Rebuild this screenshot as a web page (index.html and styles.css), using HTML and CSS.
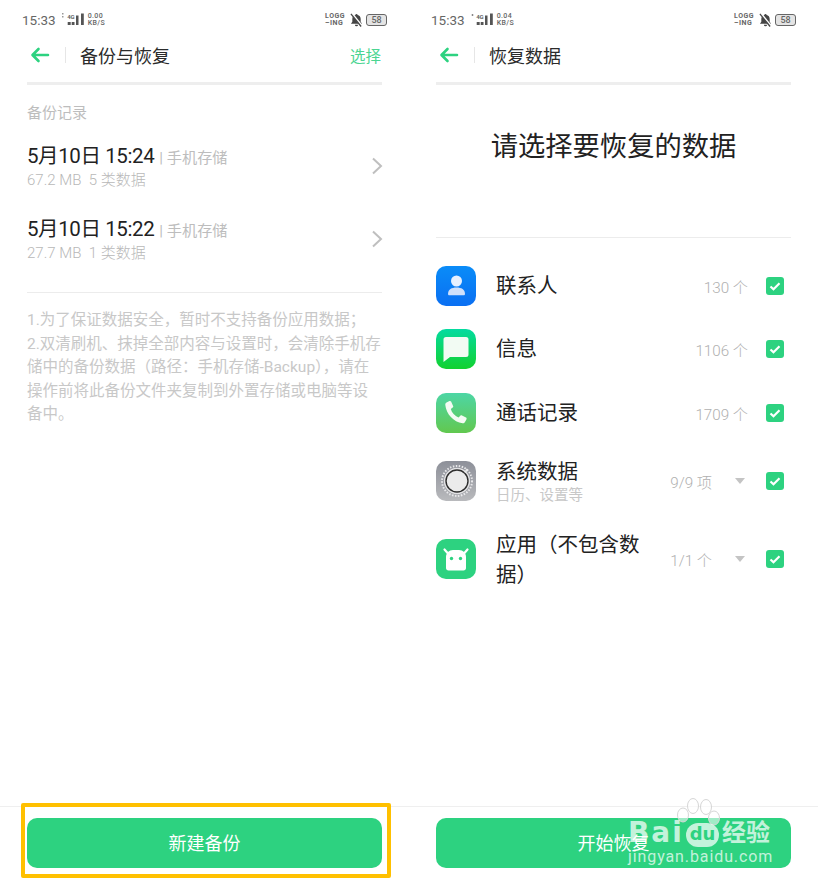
FILE: index.html
```html
<!DOCTYPE html>
<html lang="zh">
<head>
    <meta charset="UTF-8">
    <title>备份与恢复</title>
    <meta name="viewport" content="width=device-width, initial-scale=1.0">
    <link rel="stylesheet" href="styles.css">
</head>
<body>
    <div class="screens">
        <!-- left: backup list -->
        <section class="screen">
            <div class="status">
                <span class="time">15:33</span>
                <span class="net"><i>4G</i>
                    <svg width="22" height="13" viewBox="0 0 22 13"><path d="M0 1h1.500v1.500H0zM0 4h1.500v1.500H0z" fill="#999"/><path d="M5.700 10h3v3h-3zM9.700 10h2.800v3H9.700zM14 3.500h2.500V13H14zM19 1.500h2.800V13H19z" fill="#555"/></svg>
                </span>
                <span class="speed">0.00<br>KB/S</span>
                <span class="status-right">
                    <span class="logging">LOGG<br>–ING</span>
                    <svg width="13" height="14" viewBox="0 0 14 14"><path d="M7 .5a1.200 1.200 0 0 1 1.200 1.200c2 .5 3.300 2 3.300 4.300v3l1.500 2H1l1.500-2V6c0-2.300 1.300-3.800 3.300-4.300A1.200 1.200 0 0 1 7 .5zM5.300 12h3.400a1.700 1.700 0 0 1-3.400 0z" fill="#444"/><path d="M2 0l11 13.500" stroke="#fff" stroke-width="2.200"/><path d="M1 .5l11 13.500" stroke="#444" stroke-width="1.400"/></svg>
                    <span class="battery">58</span>
                </span>
            </div>
            <header class="topbar">
                <svg class="back" width="20" height="16" viewBox="0 0 20 16"><path d="M8.500 2L2.500 8l6 6M3 8h15" fill="none" stroke="#2dd280" stroke-width="2.600" stroke-linecap="round" stroke-linejoin="round"/></svg>
                <span class="bar"></span>
                <h1>备份与恢复</h1>
                <span class="action">选择</span>
            </header>
            <div class="rule"></div>
            <div class="content">
                <div class="label">备份记录</div>
                <div class="record">
                    <div class="record-text">
                        <div class="record-title">5月10日 15:24<small>| 手机存储</small></div>
                        <div class="record-sub">67.2 MB&nbsp; 5 类数据</div>
                    </div>
                    <svg width="12" height="18" viewBox="0 0 12 18"><path d="M2 1.500L10 9l-8 7.500" fill="none" stroke="#bfbfbf" stroke-width="2"/></svg>
                </div>
                <div class="record">
                    <div class="record-text">
                        <div class="record-title">5月10日 15:22<small>| 手机存储</small></div>
                        <div class="record-sub">27.7 MB&nbsp; 1 类数据</div>
                    </div>
                    <svg width="12" height="18" viewBox="0 0 12 18"><path d="M2 1.500L10 9l-8 7.500" fill="none" stroke="#bfbfbf" stroke-width="2"/></svg>
                </div>
                <div class="divider"></div>
                <p class="notes">1.为了保证数据安全，暂时不支持备份应用数据；<br>2.双清刷机、抹掉全部内容与设置时，会清除手机存储中的备份数据（路径：手机存储-Backup），请在操作前将此备份文件夹复制到外置存储或电脑等设备中。</p>
            </div>
            <footer class="bottom">
                <button class="primary">新建备份</button>
                <div class="highlight"></div>
            </footer>
        </section>

        <!-- right: restore data -->
        <section class="screen">
            <div class="status">
                <span class="time">15:33</span>
                <span class="net"><i>4G</i>
                    <svg width="22" height="13" viewBox="0 0 22 13"><path d="M.5 2.500h2v1h-2zM1 2h1v2H1z" fill="#888"/><path d="M5.700 10h3v3h-3zM9.700 10h2.800v3H9.700zM14 3.500h2.500V13H14zM19 1.500h2.800V13H19z" fill="#555"/></svg>
                </span>
                <span class="speed">0.04<br>KB/S</span>
                <span class="status-right">
                    <span class="logging">LOGG<br>–ING</span>
                    <svg width="13" height="14" viewBox="0 0 14 14"><path d="M7 .5a1.200 1.200 0 0 1 1.200 1.200c2 .5 3.300 2 3.300 4.300v3l1.500 2H1l1.500-2V6c0-2.300 1.300-3.800 3.300-4.300A1.200 1.200 0 0 1 7 .5zM5.300 12h3.400a1.700 1.700 0 0 1-3.400 0z" fill="#444"/><path d="M2 0l11 13.500" stroke="#fff" stroke-width="2.200"/><path d="M1 .5l11 13.500" stroke="#444" stroke-width="1.400"/></svg>
                    <span class="battery">58</span>
                </span>
            </div>
            <header class="topbar">
                <svg class="back" width="20" height="16" viewBox="0 0 20 16"><path d="M8.500 2L2.500 8l6 6M3 8h15" fill="none" stroke="#2dd280" stroke-width="2.600" stroke-linecap="round" stroke-linejoin="round"/></svg>
                <span class="bar"></span>
                <h1>恢复数据</h1>
            </header>
            <div class="rule"></div>
            <div class="content">
                <h2 class="prompt">请选择要恢复的数据</h2>
                <div class="divider"></div>
                <ul class="types">
                    <li class="type">
                        <span class="icon icon-contacts">
                            <svg width="40" height="40" viewBox="0 0 40 40"><circle cx="20.500" cy="15" r="5.500" fill="#e6f0ff"/><path d="M12 28c0-4.500 3.500-6.500 8.500-6.500S29 23.500 29 28c0 .8-.6 1.300-1.300 1.300H13.300c-.7 0-1.300-.5-1.300-1.300z" fill="#cfe0fb"/></svg>
                        </span>
                        <span class="name">联系人</span>
                        <span class="count">130 个</span>
                        <span class="check"><svg width="18" height="18" viewBox="0 0 18 18"><path d="M4.500 9.500l3 2.800 6-6" fill="none" stroke="#fff" stroke-width="2.200"/></svg></span>
                    </li>
                    <li class="type">
                        <span class="icon icon-messages">
                            <svg width="40" height="40" viewBox="0 0 40 40"><path d="M10 8h20a2.500 2.500 0 0 1 2.500 2.500v15A2.500 2.500 0 0 1 30 28H14l-6.500 5V10.500A2.500 2.500 0 0 1 10 8z" fill="#f2fbf3"/></svg>
                        </span>
                        <span class="name">信息</span>
                        <span class="count">1106 个</span>
                        <span class="check"><svg width="18" height="18" viewBox="0 0 18 18"><path d="M4.500 9.500l3 2.800 6-6" fill="none" stroke="#fff" stroke-width="2.200"/></svg></span>
                    </li>
                    <li class="type">
                        <span class="icon icon-phone">
                            <svg width="40" height="40" viewBox="0 0 40 40"><path d="M10.500 9.500l3-1.500c.7-.3 1.300 0 1.600.6l2 4.300c.3.600.1 1.200-.4 1.600l-1.900 1.500c1 3.800 4 7 7.700 8.500l1.800-1.800c.5-.5 1.100-.6 1.700-.3l4 2.200c.6.300.8 1 .5 1.600l-1.500 2.800c-.5.900-1.400 1.300-2.400 1.200C17.500 29.200 10.200 21 9.300 12c-.1-1.100.3-2 1.200-2.500z" fill="#f4fbf3"/></svg>
                        </span>
                        <span class="name">通话记录</span>
                        <span class="count">1709 个</span>
                        <span class="check"><svg width="18" height="18" viewBox="0 0 18 18"><path d="M4.500 9.500l3 2.800 6-6" fill="none" stroke="#fff" stroke-width="2.200"/></svg></span>
                    </li>
                    <li class="type type-system">
                        <span class="icon icon-system">
                            <svg width="40" height="40" viewBox="0 0 40 40"><circle cx="21" cy="20" r="15" fill="none" stroke="#e8e8ea" stroke-width="2" stroke-dasharray="1.500 1.500"/><circle cx="21" cy="20" r="13.500" fill="#8f9198"/><circle cx="21" cy="20" r="13.200" fill="#e2e2e4"/><circle cx="21" cy="20" r="11" fill="#ebebeb" stroke="#2e2e2e" stroke-width="1.400"/><path d="M29 11.500l2.500-3.500" stroke="#e9e9e9" stroke-width="2"/></svg>
                        </span>
                        <span class="name">系统数据<small>日历、设置等</small></span>
                        <span class="count">9/9 项</span>
                        <span class="caret"></span>
                        <span class="check"><svg width="18" height="18" viewBox="0 0 18 18"><path d="M4.500 9.500l3 2.800 6-6" fill="none" stroke="#fff" stroke-width="2.200"/></svg></span>
                    </li>
                    <li class="type type-apps">
                        <span class="icon icon-apps">
                            <svg width="40" height="40" viewBox="0 0 40 40"><path d="M8.500 10.500l3.500 4M31.500 10.500l-3.500 4" stroke="#fff" stroke-width="2.200" stroke-linecap="round"/><path d="M10 18c0-4 3-7 7-7h6c4 0 7 3 7 7v11c0 1.500-1 2.500-2.500 2.500h-15C11 31.500 10 30.500 10 29z" fill="#fff"/><circle cx="15.500" cy="19.500" r="1.700" fill="#2dd280"/><circle cx="24.500" cy="19.500" r="1.700" fill="#2dd280"/></svg>
                        </span>
                        <span class="name">应用（不包含数据）</span>
                        <span class="count">1/1 个</span>
                        <span class="caret"></span>
                        <span class="check"><svg width="18" height="18" viewBox="0 0 18 18"><path d="M4.500 9.500l3 2.800 6-6" fill="none" stroke="#fff" stroke-width="2.200"/></svg></span>
                    </li>
                </ul>
            </div>
            <footer class="bottom">
                <button class="primary">开始恢复</button>
            </footer>
            <!-- watermark sits over the button -->
            <div class="watermark">
                <svg class="paw" width="46" height="36" viewBox="0 0 46 36">
                    <g fill="#fff" fill-opacity=".55" stroke="#d6d6d6" stroke-width="1"><ellipse cx="7" cy="18" rx="5.500" ry="7"/><ellipse cx="17" cy="9" rx="5.500" ry="7.500"/><ellipse cx="30" cy="10" rx="5.500" ry="7.500"/><ellipse cx="38" cy="21" rx="5.500" ry="7"/></g>
                </svg>
                <div class="wm-brand">
                    <span class="wm-bai">Bai</span>
                    <span class="wm-du">du</span>
                    <span class="wm-cn">经验</span>
                </div>
                <div class="wm-url">jingyan.baidu.com</div>
            </div>
        </section>
    </div>
</body>
</html>
```

FILE: styles.css
```css
* {
    box-sizing: border-box;
}
html, body {
    margin: 0;
    height: 100%;
}
body {
    font-family: Roboto, "Noto Sans CJK SC", sans-serif;
    background-color: #fff;
    color: #222;
    overflow: hidden;
}
.screens {
    display: flex;
    width: 818px;
    height: 886px;
}
.screen {
    position: relative;
    width: 409px;
    height: 886px;
    display: flex;
    flex-direction: column;
}

/* status bar */
.status {
    height: 37px;
    padding: 12px 22px 0 22px;
    display: flex;
    align-items: flex-start;
    color: #666;
}
.time {
    font-size: 13.500px;
    line-height: 16px;
}
.net {
    position: relative;
    display: block;
    width: 22px;
    height: 13px;
    margin-left: 6px;
}
.net svg {
    display: block;
}
.net i {
    position: absolute;
    top: 2px;
    left: 5.500px;
    font-style: normal;
    font-size: 6px;
    font-weight: 700;
    line-height: 6px;
}
.speed {
    margin: 1px 0 0 4px;
    font-size: 7px;
    letter-spacing: .4px;
    font-weight: 500;
    line-height: 7px;
}
.status-right {
    margin-left: auto;
    display: flex;
    align-items: center;
    gap: 3px;
    height: 14px;
    margin-top: 1px;
}
.logging {
    font-size: 7px;
    letter-spacing: .5px;
    font-weight: 700;
    line-height: 7px;
    margin-right: 2px;
}
.battery {
    width: 21px;
    height: 12px;
    border: 1px solid #666;
    border-radius: 3px;
    background: #e4e4e4;
    font-size: 9px;
    line-height: 10px;
    text-align: center;
    font-weight: 500;
}

/* title bar */
.topbar {
    height: 36px;
    padding: 0 28px 0 30px;
    display: flex;
    align-items: center;
}
.back {
    flex: none;
}
.bar {
    width: 1px;
    height: 16px;
    margin-left: 15px;
    background: #e6e6e6;
}
.topbar h1 {
    margin: 0 0 0 14px;
    font-size: 18px;
    font-weight: 400;
    color: #2b2b2b;
}
.action {
    margin-left: auto;
    color: #4bd592;
    font-size: 15.500px;
}
.rule {
    height: 3px;
    margin: 9px 27px 0;
    background: #eee;
}

.content {
    flex: 1;
    padding: 0 27px;
}
.label {
    margin-top: 18px;
    font-size: 15px;
    line-height: 20px;
    color: #bdbdbd;
}
.record {
    display: flex;
    align-items: center;
    justify-content: space-between;
    height: 73.500px;
    padding-top: 2px;
}
.record svg {
    margin-right: -1px;
}
.label + .record {
    margin-top: 5px;
}
.record-text {
    padding-top: 4px;
}
.record-title {
    font-size: 20.500px;
    letter-spacing: -.4px;
    line-height: 22px;
    color: #222;
}
.record-title small {
    margin-left: 5px;
    font-size: 15.200px;
    letter-spacing: 0;
    color: #bdbdbd;
}
.record-sub {
    font-size: 15px;
    font-weight: 300;
    line-height: 22px;
    color: #b8b8b8;
}
.divider {
    height: 1px;
    background: #ececec;
}
.record + .divider {
    margin-top: 17px;
}
.notes {
    margin: 16px 0 0;
    font-size: 15.500px;
    line-height: 23.500px;
    color: #c8c8c8;
}

/* restore list */
.prompt {
    margin: 0;
    height: 152px;
    padding-top: 44px;
    font-size: 27.300px;
    line-height: 36px;
    font-weight: 400;
    text-align: center;
    color: #222;
}
.types {
    list-style: none;
    margin: 16px 0 0;
    padding: 0 7px 0 0;
}
.type {
    display: flex;
    align-items: center;
    height: 63.500px;
}
.type-system {
    height: 72px;
}
.type-apps {
    height: 84px;
}
.type-apps .name {
    padding-top: 2px;
}
.icon {
    flex: none;
    width: 40px;
    height: 40px;
    border-radius: 10px;
    overflow: hidden;
    display: block;
}
.icon svg {
    display: block;
}
.icon-contacts {
    background: linear-gradient(#0a8cf8, #0a6ff2);
}
.icon-messages {
    background: linear-gradient(#04dba0, #12d12f);
}
.icon-phone {
    background: linear-gradient(#4dd6a5, #62c84f);
}
.icon-system {
    background: linear-gradient(#8d9099, #b9babd);
}
.icon-apps {
    background: #2dd280;
}
.name {
    margin-left: 20px;
    width: 150px;
    font-size: 20.500px;
    line-height: 30px;
    color: #222;
}
.name small {
    display: block;
    font-size: 14.500px;
    line-height: 18px;
    color: #c8c8c8;
}
.count {
    margin-left: auto;
    font-size: 15.200px;
    font-weight: 300;
    color: #b0b0b0;
}
.caret {
    width: 0;
    height: 0;
    margin-left: 23px;
    margin-right: 3px;
    border-left: 5px solid transparent;
    border-right: 5px solid transparent;
    border-top: 6px solid #c4c4c4;
}
.check {
    flex: none;
    width: 18px;
    height: 18px;
    margin-left: 18px;
    border-radius: 3px;
    background: #2dd280;
}
.check svg {
    display: block;
}

/* bottom button */
.bottom {
    position: relative;
    height: 80px;
    padding: 11px 27px 0;
    border-top: 1px solid #efefef;
}
.primary {
    display: block;
    width: 100%;
    height: 50px;
    padding-bottom: 3px;
    border: none;
    border-radius: 10px;
    background-color: #2dd280;
    color: #fff;
    font-family: inherit;
    font-size: 18px;
}
.highlight {
    position: absolute;
    left: 21px;
    top: -4px;
    width: 370px;
    height: 75px;
    border: 4px solid #ffc000;
    border-radius: 2px;
}

/* baidu watermark */
.watermark {
    position: absolute;
    left: 219px;
    top: 797px;
    width: 150px;
    color: rgba(255, 255, 255, .72);
}
.paw {
    position: absolute;
    left: 48px;
    top: 0;
}
.wm-brand {
    position: absolute;
    top: 18px;
    left: 0;
    width: 150px;
    display: flex;
    align-items: center;
    white-space: nowrap;
}
.wm-bai {
    width: 58px;
    font-family: "DejaVu Sans", sans-serif;
    font-size: 28px;
    font-weight: 700;
    line-height: 36px;
    letter-spacing: 2px;
}
.wm-du {
    width: 33px;
    height: 24px;
    margin-top: 4px;
    border-radius: 12px;
    background: rgba(255, 255, 255, .72);
    color: #2dd280;
    font-family: "DejaVu Sans", sans-serif;
    font-size: 18px;
    font-weight: 700;
    line-height: 22px;
    text-align: center;
}
.wm-cn {
    margin-left: 3px;
    font-size: 24px;
    font-weight: 700;
    line-height: 36px;
}
.wm-url {
    position: absolute;
    top: 51px;
    left: 0;
    font-size: 16px;
    line-height: 18px;
    letter-spacing: .9px;
    white-space: nowrap;
}
```
